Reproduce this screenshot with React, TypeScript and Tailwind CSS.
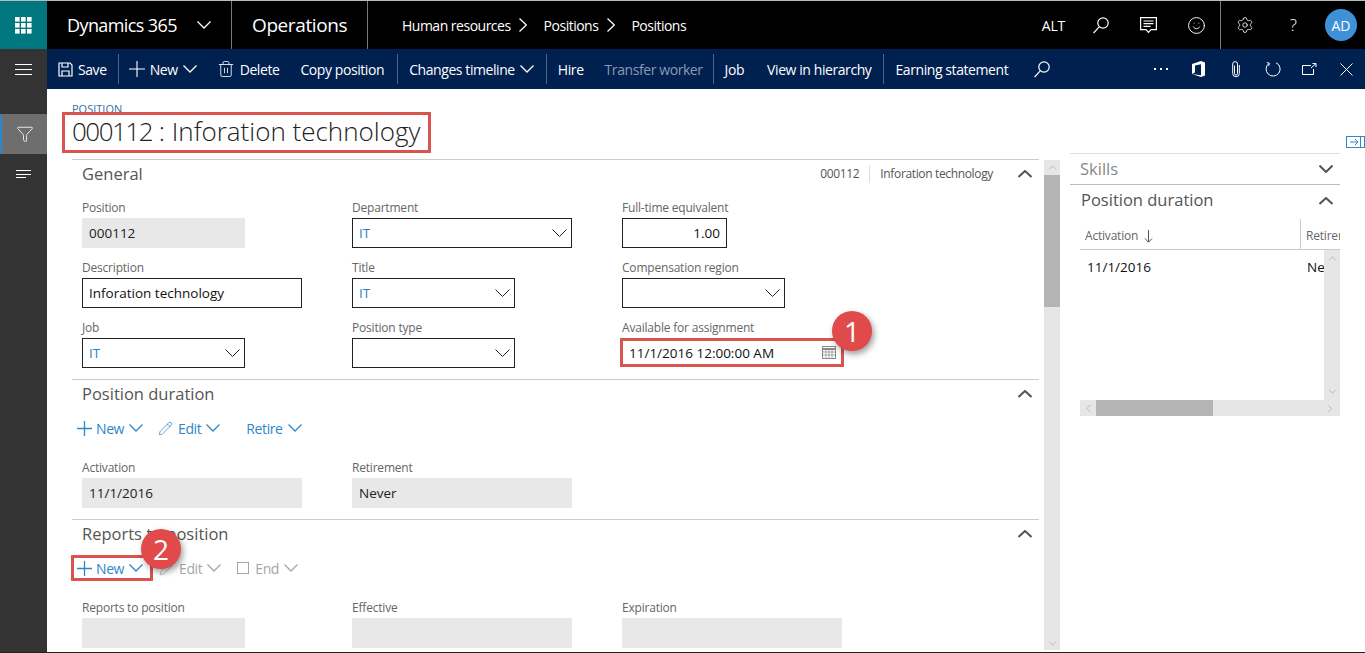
import React from 'react';
import { Trash2, Pencil, Settings, Funnel, Smile, ChevronUp, ChevronDown, ChevronLeft, ChevronRight } from 'lucide-react';

const font = "font-['Open_Sans',sans-serif]";

// wide flat chevrons, lucide's are too narrow for this UI
const ChevDown = ({ w = 14, sw = 1.3, className = '' }: { w?: number; sw?: number; className?: string }) => (
  <svg width={w} height={w / 2 + 1} viewBox={`0 0 ${w} ${w / 2 + 1}`} fill="none" stroke="currentColor" strokeWidth={sw} className={className}>
    <path d={`M.5 .5L${w / 2} ${w / 2}L${w - 0.5} .5`} />
  </svg>
);

const ChevUp = ({ w = 14, sw = 2, className = '' }: { w?: number; sw?: number; className?: string }) => (
  <svg width={w} height={w / 2 + 1} viewBox={`0 0 ${w} ${w / 2 + 1}`} fill="none" stroke="currentColor" strokeWidth={sw} className={className}>
    <path d={`M.5 ${w / 2}L${w / 2} 1L${w - 0.5} ${w / 2}`} />
  </svg>
);

const CrumbChev = ({ className = '' }: { className?: string }) => (
  <svg width="8" height="14" viewBox="0 0 8 14" fill="none" stroke="#fff" strokeWidth="1.2" className={className}>
    <path d="M.5 .5L7.3 7L.5 13.5" />
  </svg>
);

const PlusIcon = ({ s = 15, sw = 1.3 }: { s?: number; sw?: number }) => (
  <svg width={s} height={s} viewBox={`0 0 ${s} ${s}`} stroke="currentColor" strokeWidth={sw}>
    <path d={`M0 ${s / 2}H${s}M${s / 2} 0V${s}`} />
  </svg>
);

const SearchIcon = ({ className = '' }: { className?: string }) => (
  <svg width="16" height="17" viewBox="0 0 16 17" fill="none" stroke="#fff" strokeWidth="1.2" className={className}>
    <circle cx="10" cy="6" r="5.2" />
    <path d="M6.2 9.8L.6 16" />
  </svg>
);

const MessageIcon = () => (
  <svg width="17" height="17" viewBox="0 0 17 17" fill="none" stroke="#fff" strokeWidth="1.2">
    <path d="M.6.6h15.8v12H11l-2.5 2.8L6 12.6H.6z" />
    <path d="M3.5 4h10M3.5 6.7h10M3.5 9.4h7" />
  </svg>
);

const SaveIcon = () => (
  <svg width="15" height="15" viewBox="0 0 15 15" fill="none" stroke="#fff" strokeWidth="1.2">
    <path d="M1 1h11l2 2v11H1z" />
    <path d="M4 1v4h6V1M4 14V9h7v5" />
  </svg>
);

const WaffleIcon = () => (
  <svg width="17" height="17" viewBox="0 0 17 17" fill="#fff">
    {[0, 6, 12].map((y) => [0, 6, 12].map((x) => <rect key={`${x}-${y}`} x={x} y={y} width="4.6" height="4.6" />))}
  </svg>
);

const OfficeIcon = () => (
  <svg width="14" height="16" viewBox="0 0 14 16" fill="#fff">
    <path d="M0 3l9-3 4 1.5v13L9 16l-9-3 9 1.2V3.2L3 4.5v7L0 13z" />
  </svg>
);

const ClipIcon = () => (
  <svg width="8" height="17" viewBox="0 0 8 17" fill="none" stroke="#fff" strokeWidth="1">
    <path d="M2.5 4.5v8a1.5 1.5 0 0 0 3 0V3a2.4 2.4 0 0 0-4.8 0v9.5a3.3 3.3 0 0 0 6.6 0V4" />
  </svg>
);

const RefreshIcon = () => (
  <svg width="16" height="16" viewBox="0 0 16 16" fill="none" stroke="#fff" strokeWidth="1">
    <path d="M4 2.4A7 7 0 1 0 11 1.7" />
    <path d="M1.8 1.5L4.4 2.3 3.6 5" />
  </svg>
);

const PopoutIcon = () => (
  <svg width="15" height="12" viewBox="0 0 15 12" fill="none" stroke="#fff" strokeWidth="1">
    <path d="M9 2.5H.5v9h11V6" />
    <path d="M9 5l5-4.5M10.5.5h3.5V4" />
  </svg>
);

const CloseIcon = () => (
  <svg width="13" height="13" viewBox="0 0 13 13" stroke="#fff" strokeWidth="1">
    <path d="M.5.5l12 12M12.5.5l-12 12" />
  </svg>
);

const CalendarIcon = () => (
  <svg width="14" height="13" viewBox="0 0 14 13" fill="none" stroke="#888" strokeWidth="1">
    <rect x=".5" y=".5" width="13" height="12" />
    <path d="M.5 3h13" strokeWidth="2" />
    <path d="M.5 6h13M.5 9h13M4 3v9M7 3v9M10 3v9" strokeWidth=".7" />
  </svg>
);

const ExpandIcon = () => (
  <svg width="19" height="12" viewBox="0 0 19 12" fill="none" stroke="#2f86c8" strokeWidth="1">
    <rect x=".5" y=".5" width="18" height="11" />
    <path d="M14.5 .5v11" />
    <path d="M4 6h8M9 3l3 3-3 3" />
  </svg>
);

const SortArrow = () => (
  <svg width="9" height="13" viewBox="0 0 9 13" fill="none" stroke="#555" strokeWidth="1" className="ml-[6px]">
    <path d="M4.5 0v12M1 8.5l3.5 3.7L8 8.5" />
  </svg>
);

const Sep = ({ className = '' }: { className?: string }) => (
  <div className={`w-px h-[30px] bg-[#4a6488] ${className}`} />
);

const Label = ({ text }: { text: string }) => (
  <div className="h-4 mb-[2px] text-[12px] leading-4 text-[#666] tracking-[-0.2px]">{text}</div>
);

const Field = ({ label, value = '', width, kind = 'text', right }: { label: string; value?: string; width: string; kind?: 'text' | 'read' | 'select'; right?: boolean }) => (
  <div>
    <Label text={label} />
    <div
      className={`${width} h-[30px] flex items-center justify-between text-[13.5px] ${
        kind === 'read' ? 'bg-[#e8e8e8] text-[#222] px-[7px]' : kind === 'select' ? 'border border-[#222] text-[#2f7fc0] pl-[6px] pr-[4px]' : 'border border-[#222] text-[#111] px-[6px]'
      }`}
    >
      <span className={`pt-[1px] ${right ? 'ml-auto' : ''}`}>{value}</span>
      {kind === 'select' && <ChevDown w={15} sw={1} className="text-[#222]" />}
    </div>
  </div>
);

const SectionHead = ({ title, extra }: { title: string; extra?: React.ReactNode }) => (
  <div className="h-[28px] flex items-center pl-[10px] pr-[7px]">
    <span className="text-[16.5px] text-[#555]">{title}</span>
    <div className="ml-auto flex items-center">
      {extra}
      <ChevUp className="text-[#555]" />
    </div>
  </div>
);

const ToolBtn = ({ text, disabled, className = '', icon }: { text: string; disabled?: boolean; className?: string; icon?: React.ReactNode }) => (
  <div className={`flex items-center text-[14px] tracking-[-0.4px] ${disabled ? 'text-[#a6a6a6]' : 'text-[#2f86c8]'} ${className}`}>
    {icon}
    <span>{text}</span>
    <ChevDown className="ml-[5px]" />
  </div>
);

const CmdText = ({ text, className = '' }: { text: string; className?: string }) => (
  <span className={`text-[14px] tracking-[-0.42px] ${className}`}>{text}</span>
);

export default function App() {
  return (
    <div className={`${font} relative w-full h-screen overflow-hidden bg-white flex flex-col`}>
      {/* nav bar */}
      <div className="h-[49px] shrink-0 bg-black border-t border-[#bbb] flex items-center text-white">
        <div className="w-[47px] h-full bg-[#00777f] flex items-center justify-center">
          <WaffleIcon />
        </div>
        <div className="w-[185px] h-full border-r border-[#777] flex items-center pl-[20px]">
          <span className="text-[18px] tracking-[-0.6px]">Dynamics 365</span>
          <ChevDown className="ml-[20px]" />
        </div>
        <div className="w-[136px] h-full border-r border-[#777] flex items-center pl-[20px]">
          <span className="text-[19px] tracking-[-0.4px]">Operations</span>
        </div>
        <div className="flex items-center pl-[34px] text-[14px] tracking-[-0.5px]">
          <span>Human resources</span>
          <CrumbChev className="ml-[8px] mr-[17px]" />
          <span>Positions</span>
          <CrumbChev className="ml-[9px] mr-[16px]" />
          <span>Positions</span>
        </div>
        <div className="ml-auto flex items-center h-full">
          <span className="text-[14px] tracking-[-0.3px]">ALT</span>
          <SearchIcon className="ml-[28px]" />
          <div className="ml-[31px]"><MessageIcon /></div>
          <Smile size={19} strokeWidth={1.2} className="ml-[30px] mr-[14px]" />
          <div className="h-full flex items-center border-l border-[#777] pl-[15px] pr-[8px]">
            <Settings size={18} strokeWidth={1.1} />
            <span className="ml-[36px] text-[17px] font-light">?</span>
            <div className="ml-[28px] w-8 h-8 rounded-full bg-[#3d91d6] flex items-center justify-center text-[14px]">AD</div>
          </div>
        </div>
      </div>

      <div className="flex flex-1 min-h-0">
        {/* left rail */}
        <div className="w-[47px] shrink-0 bg-[#333] flex flex-col text-white">
          <div className="h-[40px] flex flex-col items-center justify-center gap-[4px]">
            <div className="w-[17px] h-px bg-white" />
            <div className="w-[17px] h-px bg-white" />
            <div className="w-[17px] h-px bg-white" />
          </div>
          <div className="mt-[25px] h-[40px] bg-[#6e6e6e] border-l-2 border-[#2f86c8] flex items-center justify-center">
            <Funnel size={18} strokeWidth={1.1} />
          </div>
          <div className="h-[40px] flex flex-col items-start justify-center gap-[2.5px] pl-[16px]">
            <div className="w-[15px] h-px bg-white" />
            <div className="w-[15px] h-px bg-white" />
            <div className="w-[10px] h-px bg-white" />
          </div>
        </div>

        <div className="flex-1 min-w-0 flex flex-col">
          {/* action pane */}
          <div className="h-[40px] shrink-0 bg-[#002050] text-white flex items-center pl-[11px]">
            <SaveIcon />
            <CmdText text="Save" className="ml-[5px]" />
            <Sep className="ml-[11px]" />
            <div className="ml-[10px]"><PlusIcon s={16} sw={1.1} /></div>
            <CmdText text="New" className="ml-[5px]" />
            <ChevDown className="ml-[5px]" />
            <Trash2 size={18} strokeWidth={1.1} className="ml-[20px]" />
            <CmdText text="Delete" className="ml-[5px]" />
            <CmdText text="Copy position" className="ml-[21px]" />
            <Sep className="ml-[13px]" />
            <CmdText text="Changes timeline" className="ml-[11px]" />
            <ChevDown className="ml-[5px]" />
            <Sep className="ml-[12px]" />
            <CmdText text="Hire" className="ml-[11px]" />
            <CmdText text="Transfer worker" className="ml-[21px] text-[#8a9ab4]" />
            <Sep className="ml-[10px]" />
            <CmdText text="Job" className="ml-[11px]" />
            <CmdText text="View in hierarchy" className="ml-[23px]" />
            <Sep className="ml-[12px]" />
            <CmdText text="Earning statement" className="ml-[11px]" />
            <SearchIcon className="ml-[26px]" />
            <div className="ml-auto flex items-center pr-[12px]">
              <div className="flex gap-[4px]">
                <div className="w-[2px] h-[2px] bg-white" />
                <div className="w-[2px] h-[2px] bg-white" />
                <div className="w-[2px] h-[2px] bg-white" />
              </div>
              <div className="ml-[24px]"><OfficeIcon /></div>
              <div className="ml-[26px]"><ClipIcon /></div>
              <div className="ml-[25px]"><RefreshIcon /></div>
              <div className="ml-[21px]"><PopoutIcon /></div>
              <div className="ml-[23px]"><CloseIcon /></div>
            </div>
          </div>

          <div className="flex-1 min-h-0 flex">
            {/* main form */}
            <div className="w-[997px] shrink-0 pl-[25px] pr-[5px]">
              <div className="h-[70px] pt-[14px]">
                <div className="h-3 text-[11px] leading-3 text-[#3a6ea5]">POSITION</div>
                <div className="-mt-[3px] -ml-[10px] relative w-[369px] h-[41px] bg-white border-[3px] border-[#d9534f] flex items-center pl-[7px] pb-[2px] whitespace-nowrap">
                  <span className="text-[26px] text-[#222] font-light">
                    <span className="tracking-[-1.5px]">000112</span> : Inforation technology
                  </span>
                </div>
              </div>

              <div className="h-[220px] border-t border-[#ccc]">
                <SectionHead
                  title="General"
                  extra={
                    <div className="flex items-center text-[12px] text-[#555] tracking-[-0.35px] mr-[25px]">
                      <span>000112</span>
                      <div className="w-px h-[18px] bg-[#ddd] mx-[10px]" />
                      <span>Inforation technology</span>
                    </div>
                  }
                />
                <div className="pt-[12px] pl-[10px] grid grid-cols-[270px_270px_270px] gap-y-[12px]">
                  <Field label="Position" value="000112" width="w-[163px]" kind="read" />
                  <Field label="Department" value="IT" width="w-[220px]" kind="select" />
                  <Field label="Full-time equivalent" value="1.00" width="w-[105px]" right />
                  <Field label="Description" value="Inforation technology" width="w-[220px]" />
                  <Field label="Title" value="IT" width="w-[163px]" kind="select" />
                  <Field label="Compensation region" width="w-[163px]" kind="select" />
                  <Field label="Job" value="IT" width="w-[163px]" kind="select" />
                  <Field label="Position type" width="w-[163px]" kind="select" />
                  <div>
                    <Label text="Available for assignment" />
                    <div className="mt-[2px] -ml-[2px] w-[224px] h-[29px] border-[3px] border-[#d9534f] flex items-center justify-between pl-[6px] pr-[5px] text-[13.5px] text-[#111]">
                      <span className="pt-[1px]">11/1/2016 12:00:00 AM</span>
                      <CalendarIcon />
                    </div>
                  </div>
                </div>
              </div>

              <div className="h-[140px] border-t border-[#ccc]">
                <SectionHead title="Position duration" />
                <div className="mt-[7px] h-[26px] pl-[5px] flex items-center">
                  <ToolBtn text="New" icon={<div className="mr-[4px]"><PlusIcon /></div>} />
                  <ToolBtn text="Edit" icon={<Pencil size={15} strokeWidth={1.2} className="mr-[5px]" />} className="ml-[15px]" />
                  <ToolBtn text="Retire" className="ml-[26px]" />
                </div>
                <div className="mt-[19px] pl-[10px] grid grid-cols-[270px_270px]">
                  <Field label="Activation" value="11/1/2016" width="w-[220px]" kind="read" />
                  <Field label="Retirement" value="Never" width="w-[220px]" kind="read" />
                </div>
              </div>

              <div className="border-t border-[#ccc]">
                <SectionHead title="Reports to position" />
                <div className="mt-[7px] h-[26px] flex items-center">
                  <div className="-ml-[1px] h-[26px] w-[82px] border-[3px] border-[#d9534f] pl-[3px] flex items-center">
                    <ToolBtn text="New" icon={<div className="mr-[4px]"><PlusIcon /></div>} />
                  </div>
                  <ToolBtn text="Edit" disabled icon={<Pencil size={15} strokeWidth={1.2} className="mr-[5px]" />} className="ml-[6px]" />
                  <ToolBtn text="End" disabled icon={<span className="w-[12px] h-[12px] border border-[#a6a6a6] mr-[6px]" />} className="ml-[16px]" />
                </div>
                <div className="mt-[19px] pl-[10px] grid grid-cols-[270px_270px_270px]">
                  <Field label="Reports to position" width="w-[163px]" kind="read" />
                  <Field label="Effective" width="w-[220px]" kind="read" />
                  <Field label="Expiration" width="w-[220px]" kind="read" />
                </div>
              </div>
            </div>

            {/* form scrollbar */}
            <div className="w-[16px] shrink-0 mt-[71px] mb-[3px] bg-[#e6e6e6] flex flex-col items-center justify-between relative">
              <div className="w-full h-[15px] flex items-center justify-center">
                <ChevronUp size={13} strokeWidth={0.9} className="text-[#888]" />
              </div>
              <div className="absolute top-[15px] w-full h-[132px] bg-[#b4b4b4]" />
              <ChevronDown size={13} strokeWidth={0.9} className="text-[#888]" />
            </div>

            {/* right panel */}
            <div className="ml-[10px] w-[270px] shrink-0 pt-[64px]">
              <div className="h-[32px] border-t border-b border-t-[#ddd] border-b-[#bbb] flex items-center pl-[10px] pr-[7px]">
                <span className="text-[16.5px] text-[#888]">Skills</span>
                <ChevDown sw={2} className="ml-auto text-[#555]" />
              </div>
              <div className="h-[31px] mb-[3px] flex items-center pl-[11px] pr-[7px]">
                <span className="text-[16.5px] text-[#555]">Position duration</span>
                <ChevUp className="ml-auto text-[#555]" />
              </div>
              <div className="ml-[10px] w-[260px] overflow-hidden">
                <div className="h-[31px] border-b border-[#ccc] flex items-end whitespace-nowrap text-[12px] text-[#666] tracking-[-0.2px]">
                  <div className="w-[220px] shrink-0 h-[26px] flex items-center pl-[5px]">
                    <span>Activation</span>
                    <SortArrow />
                  </div>
                  <div className="h-[30px] border-l border-[#ccc] flex items-center pl-[5px] pt-[4px]">Retirement</div>
                </div>
                <div className="h-[150px] flex">
                  <div className="w-[244px] flex pt-[7px] text-[13.5px] text-[#111] overflow-hidden whitespace-nowrap">
                    <div className="w-[220px] shrink-0 pl-[7px]">11/1/2016</div>
                    <div className="pl-[7px]">Never</div>
                  </div>
                  <div className="w-[16px] bg-[#e6e6e6] flex flex-col items-center justify-between py-[2px]">
                    <ChevronUp size={13} strokeWidth={0.9} className="text-[#888]" />
                    <ChevronDown size={13} strokeWidth={0.9} className="text-[#888]" />
                  </div>
                </div>
                <div className="h-[16px] bg-[#e6e6e6] flex items-center">
                  <div className="w-[16px] flex justify-center"><ChevronLeft size={13} strokeWidth={0.9} className="text-[#888]" /></div>
                  <div className="w-[117px] h-full bg-[#b4b4b4]" />
                  <div className="ml-auto w-[16px] flex justify-center pr-[4px]"><ChevronRight size={13} strokeWidth={0.9} className="text-[#888]" /></div>
                </div>
              </div>
            </div>
          </div>
        </div>
      </div>

      {/* overlays */}
      <div className="absolute top-[136px] right-0"><ExpandIcon /></div>
      <div className="absolute left-[832px] top-[311px] w-10 h-10 rounded-full bg-[#e04a4a] shadow-[2px_3px_6px_rgba(0,0,0,0.4)] flex items-center justify-center text-white text-[28px]">1</div>
      <div className="absolute left-[141px] top-[529px] w-10 h-10 rounded-full bg-[#e04a4a] shadow-[2px_3px_6px_rgba(0,0,0,0.4)] flex items-center justify-center text-white text-[28px]">2</div>
      <div className="absolute bottom-0 left-0 right-0 h-px bg-[#222]" />
    </div>
  );
}
